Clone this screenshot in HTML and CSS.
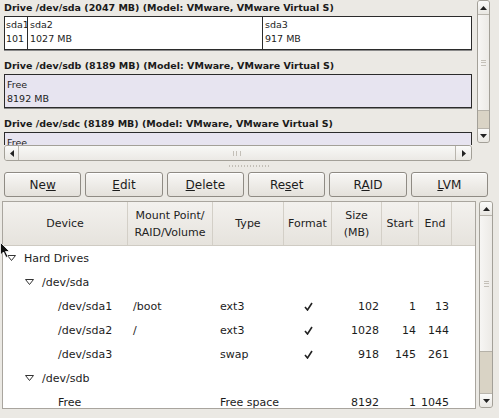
FILE: index.html
```html
<!DOCTYPE html>
<html>
<head>
<meta charset="utf-8">
<title>Partitioning</title>
<link rel="stylesheet" href="styles.css">
</head>
<body>
<div class="window">
  <div class="disk-pane">
    <div class="drives">
      <section class="drive">
        <h2 class="drive-title">Drive /dev/sda (2047 MB) (Model: VMware, VMware Virtual S)</h2>
        <div class="drive-bar">
          <div class="part part-sda1"><span>sda1</span><span>101</span></div>
          <div class="part part-sda2"><span>sda2</span><span>1027 MB</span></div>
          <div class="part part-sda3"><span>sda3</span><span>917 MB</span></div>
        </div>
      </section>
      <section class="drive">
        <h2 class="drive-title">Drive /dev/sdb (8189 MB) (Model: VMware, VMware Virtual S)</h2>
        <div class="drive-bar free">
          <div class="part part-full"><span>Free</span><span>8192 MB</span></div>
        </div>
      </section>
      <section class="drive">
        <h2 class="drive-title">Drive /dev/sdc (8189 MB) (Model: VMware, VMware Virtual S)</h2>
        <div class="drive-bar free">
          <div class="part part-full"><span>Free</span><span>8192 MB</span></div>
        </div>
      </section>
    </div>
    <div class="vscroll vscroll-top">
      <div class="sb-btn"><svg width="7" height="4" viewBox="0 0 7 4"><polygon points="0,4 7,4 3.5,0" fill="#222"/></svg></div>
      <div class="sb-thumb thumb-top"><span class="grip-v"></span></div>
      <div class="sb-trough"></div>
      <div class="sb-btn"><svg width="7" height="4" viewBox="0 0 7 4"><polygon points="0,0 7,0 3.5,4" fill="#222"/></svg></div>
    </div>
    <div class="hscroll">
      <div class="sb-btn-h"><svg width="4" height="7" viewBox="0 0 4 7"><polygon points="4,0 4,7 0,3.5" fill="#222"/></svg></div>
      <div class="sb-thumb-h"><span class="grip-h"></span></div>
      <div class="sb-btn-h sb-btn-right"><svg width="4" height="7" viewBox="0 0 4 7"><polygon points="0,0 0,7 4,3.5" fill="#222"/></svg></div>
    </div>
  </div>

  <div class="pane-handle"><span class="handle-grip"></span></div>

  <div class="buttons">
    <button class="btn">Ne<u>w</u></button>
    <button class="btn"><u>E</u>dit</button>
    <button class="btn"><u>D</u>elete</button>
    <button class="btn">Re<u>s</u>et</button>
    <button class="btn">R<u>A</u>ID</button>
    <button class="btn"><u>L</u>VM</button>
  </div>

  <div class="tree">
    <div class="tree-frame">
      <div class="tree-head">
        <div class="th">Device</div>
        <div class="th">Mount Point/<br>RAID/Volume</div>
        <div class="th">Type</div>
        <div class="th">Format</div>
        <div class="th">Size<br>(MB)</div>
        <div class="th">Start</div>
        <div class="th">End</div>
        <div class="th th-fill"></div>
      </div>
      <div class="tree-body">
        <div class="row">
          <div class="td dev lvl0"><svg class="exp" width="9" height="6" viewBox="0 0 9 6"><polygon points="0.5,0.5 8.5,0.5 4.5,5.5" fill="#fff" stroke="#333"/></svg>Hard Drives</div>
          <div class="td"></div><div class="td"></div><div class="td"></div><div class="td"></div><div class="td"></div><div class="td"></div><div class="td"></div>
        </div>
        <div class="row">
          <div class="td dev lvl1"><svg class="exp" width="9" height="6" viewBox="0 0 9 6"><polygon points="0.5,0.5 8.5,0.5 4.5,5.5" fill="#fff" stroke="#333"/></svg>/dev/sda</div>
          <div class="td"></div><div class="td"></div><div class="td"></div><div class="td"></div><div class="td"></div><div class="td"></div><div class="td"></div>
        </div>
        <div class="row">
          <div class="td dev lvl2">/dev/sda1</div>
          <div class="td mnt">/boot</div>
          <div class="td">ext3</div>
          <div class="td chk"><svg width="9" height="9" viewBox="0 0 9 9"><path d="M1 5 L3.5 8 L8 1" fill="none" stroke="#222" stroke-width="1.6"/></svg></div>
          <div class="td num">102</div>
          <div class="td num">1</div>
          <div class="td num">13</div>
          <div class="td"></div>
        </div>
        <div class="row">
          <div class="td dev lvl2">/dev/sda2</div>
          <div class="td mnt">/</div>
          <div class="td">ext3</div>
          <div class="td chk"><svg width="9" height="9" viewBox="0 0 9 9"><path d="M1 5 L3.5 8 L8 1" fill="none" stroke="#222" stroke-width="1.6"/></svg></div>
          <div class="td num">1028</div>
          <div class="td num">14</div>
          <div class="td num">144</div>
          <div class="td"></div>
        </div>
        <div class="row">
          <div class="td dev lvl2">/dev/sda3</div>
          <div class="td mnt"></div>
          <div class="td">swap</div>
          <div class="td chk"><svg width="9" height="9" viewBox="0 0 9 9"><path d="M1 5 L3.5 8 L8 1" fill="none" stroke="#222" stroke-width="1.6"/></svg></div>
          <div class="td num">918</div>
          <div class="td num">145</div>
          <div class="td num">261</div>
          <div class="td"></div>
        </div>
        <div class="row">
          <div class="td dev lvl1"><svg class="exp" width="9" height="6" viewBox="0 0 9 6"><polygon points="0.5,0.5 8.5,0.5 4.5,5.5" fill="#fff" stroke="#333"/></svg>/dev/sdb</div>
          <div class="td"></div><div class="td"></div><div class="td"></div><div class="td"></div><div class="td"></div><div class="td"></div><div class="td"></div>
        </div>
        <div class="row">
          <div class="td dev lvl2">Free</div>
          <div class="td mnt"></div>
          <div class="td">Free space</div>
          <div class="td chk"></div>
          <div class="td num">8192</div>
          <div class="td num">1</div>
          <div class="td num">1045</div>
          <div class="td"></div>
        </div>
      </div>
    </div>
    <div class="vscroll vscroll-tree">
      <div class="sb-btn"><svg width="7" height="4" viewBox="0 0 7 4"><polygon points="0,4 7,4 3.5,0" fill="#222"/></svg></div>
      <div class="sb-thumb thumb-tree"><span class="grip-v"></span></div>
      <div class="sb-trough"></div>
      <div class="sb-btn"><svg width="7" height="4" viewBox="0 0 7 4"><polygon points="0,0 7,0 3.5,4" fill="#222"/></svg></div>
    </div>
  </div>

  <svg class="cursor" width="10" height="16" viewBox="0 0 10 16"><path d="M0.5 0.5 L0.5 13 L3.5 10 L6 15.5 L8 14.5 L5.5 9.5 L9.5 9.5 Z" fill="#111" stroke="#fff" stroke-width="0.8"/></svg>
</div>
</body>
</html>
```

FILE: styles.css
```css
html, body {
  margin: 0;
  padding: 0;
}
body {
  width: 499px;
  height: 418px;
  overflow: hidden;
  background: #ebe9e4;
  font-family: "DejaVu Sans", "Liberation Sans", sans-serif;
  color: #1c1c1c;
}
.window {
  position: relative;
  height: 418px;
}

/* ---------- top disk pane ---------- */
.disk-pane {
  display: grid;
  grid-template-columns: 468px 13px;
  grid-template-rows: 145px 16px;
  column-gap: 5px;
  padding-left: 4px;
}
.drives {
  overflow: hidden;
  height: 145px;
}
.drive {
  margin-bottom: 8px;
}
.drive-title {
  margin: 0;
  height: 16px;
  line-height: 16px;
  font-size: 9.5px;
  font-weight: bold;
  color: #1a1a1a;
  white-space: nowrap;
}
.drive-bar {
  display: flex;
  box-sizing: border-box;
  height: 34px;
  border: 1px solid #2b2b2b;
  box-shadow: 0 1px 0 #8a8a8a;
  background: #fff;
}
.drive-bar.free {
  background: #e7e4f0;
}
.part {
  display: flex;
  flex-direction: column;
  box-sizing: border-box;
  padding: 1px 0 0 2px;
  font-size: 9.5px;
  line-height: 14px;
  white-space: nowrap;
  overflow: hidden;
}
.drive-bar.free .part {
  padding-top: 3px;
}
.part-sda1 { width: 23px; border-right: 1px solid #2b2b2b; padding-left: 1px; }
.part-sda2 { width: 235px; border-right: 1px solid #2b2b2b; }
.part-sda3 { flex: 1; }
.part-full { flex: 1; }

/* scrollbars */
.vscroll {
  display: flex;
  flex-direction: column;
  box-sizing: border-box;
  border: 1px solid #a3a098;
  border-radius: 3px;
  background: #d9d3c5;
  overflow: hidden;
}
.vscroll-top {
  height: 143px;
}
.sb-btn {
  height: 13px;
  flex: none;
  display: flex;
  align-items: center;
  justify-content: center;
  background: linear-gradient(#fbfbfa, #e9e7e2);
}
.sb-btn:first-child { border-bottom: 1px solid #b9b5ad; }
.sb-btn:last-child { border-top: 1px solid #b9b5ad; }
.sb-thumb {
  flex: none;
  display: flex;
  align-items: center;
  justify-content: center;
  background: linear-gradient(90deg, #f7f6f4, #eceae6);
  border-bottom: 1px solid #b5b1a8;
}
.thumb-top { height: 95px; }
.sb-trough { flex: 1; }
.grip-v {
  width: 5px;
  height: 6px;
  border-top: 1px solid #c4c0b8;
  border-bottom: 1px solid #c4c0b8;
  box-sizing: border-box;
  position: relative;
}
.grip-v::after {
  content: "";
  position: absolute;
  left: 0;
  right: 0;
  top: 1px;
  border-top: 1px solid #c4c0b8;
}

.hscroll {
  grid-column: 1;
  display: flex;
  box-sizing: border-box;
  height: 16px;
  border: 1px solid #a3a098;
  border-radius: 3px;
  background: #f1f0ed;
  overflow: hidden;
}
.sb-btn-h {
  width: 13px;
  flex: none;
  display: flex;
  align-items: center;
  justify-content: center;
  background: linear-gradient(#fbfbfa, #e9e7e2);
  border-right: 1px solid #b9b5ad;
}
.sb-btn-right {
  width: 15px;
  border-right: none;
  border-left: 1px solid #b9b5ad;
}
.sb-thumb-h {
  flex: 1;
  display: flex;
  align-items: center;
  justify-content: center;
  background: linear-gradient(#f8f8f6, #ebe9e5);
}
.grip-h {
  width: 6px;
  height: 5px;
  border-left: 1px solid #c4c0b8;
  border-right: 1px solid #c4c0b8;
  position: relative;
}
.grip-h::after {
  content: "";
  position: absolute;
  top: 0;
  bottom: 0;
  left: 2px;
  border-left: 1px solid #c4c0b8;
}

/* pane handle */
.pane-handle {
  height: 10px;
  display: flex;
  align-items: center;
  justify-content: center;
}
.handle-grip {
  width: 42px;
  height: 2px;
  background: repeating-linear-gradient(90deg, #c2beb6 0 1px, transparent 1px 3px);
}

/* buttons */
.buttons {
  display: grid;
  grid-template-columns: repeat(6, 1fr);
  column-gap: 4px;
  padding: 1px 11px 0 4px;
  height: 25px;
}
.btn {
  box-sizing: border-box;
  height: 25px;
  margin: 0;
  padding: 0;
  border: 1px solid #8f8b84;
  border-radius: 3px;
  background: linear-gradient(#f8f7f5, #e4e1db);
  font-family: "DejaVu Sans", "Liberation Sans", sans-serif;
  font-size: 12px;
  color: #1c1c1c;
  box-shadow: inset 0 1px 0 #fff;
}
.btn u {
  text-decoration: underline;
  text-underline-offset: 1px;
}

/* tree view */
.tree {
  display: grid;
  grid-template-columns: 474px 14px;
  column-gap: 3px;
  margin-top: 4px;
  padding-left: 2px;
  height: 208px;
}
.tree-frame {
  box-sizing: border-box;
  border: 1px solid #a9a59e;
  background: #fff;
  overflow: hidden;
}
.tree-head,
.row {
  display: grid;
  grid-template-columns: 125px 85px 71px 48px 50px 37px 33px 1fr;
}
.tree-head {
  height: 44px;
  background: linear-gradient(#f3f1ee, #e6e3dd);
  border-bottom: 1px solid #cfcbc3;
  box-sizing: border-box;
}
.th {
  display: flex;
  align-items: center;
  justify-content: center;
  text-align: center;
  font-size: 11px;
  line-height: 17px;
  border-right: 1px solid #d3cfc7;
  color: #222;
}
.th-fill { border-right: none; }
.row {
  height: 24px;
}
.td {
  display: flex;
  align-items: center;
  font-size: 11px;
  white-space: nowrap;
  padding-left: 7px;
}
.dev { padding-left: 0; }
.lvl0 { padding-left: 4px; }
.lvl0 .exp { margin-right: 8px; }
.lvl1 { padding-left: 22px; }
.lvl1 .exp { margin-right: 8px; }
.lvl2 { padding-left: 55px; }
.mnt { padding-left: 5px; }
.chk {
  justify-content: center;
  padding-left: 0;
}
.num {
  justify-content: flex-end;
  padding-left: 0;
  padding-right: 3px;
}

.vscroll-tree {
  height: 207px;
}
.thumb-tree { height: 135px; }

.cursor {
  position: absolute;
  left: 0;
  top: 242px;
}
```
